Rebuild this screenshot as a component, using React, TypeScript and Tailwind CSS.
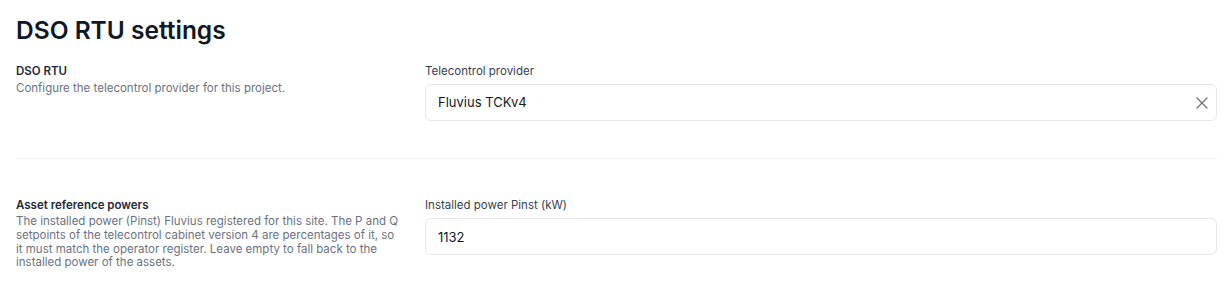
import React, { useState } from 'react';
import { X } from 'lucide-react';

export default function App() {
  const [provider, setProvider] = useState('Fluvius TCKv4');
  const [pinst, setPinst] = useState('1132');

  return (
    <div className="min-h-screen bg-white pl-4 pr-[13px] pt-[14px] font-['Inter',sans-serif] text-gray-900">
      <h1 className="text-[24.5px] leading-8 font-semibold text-gray-900">DSO RTU settings</h1>

      {/* Telecontrol provider */}
      <section className="mt-[17px] grid grid-cols-[385px_1fr] gap-6 border-b border-gray-100 pb-[37px]">
        <div>
          <h3 className="text-[11.5px] leading-4 font-semibold text-gray-800">DSO RTU</h3>
          <p className="mt-0.5 text-[11.5px] leading-[14px] text-gray-500">Configure the telecontrol provider for this project.</p>
        </div>
        <div>
          <label className="block text-[11.5px] leading-4 text-gray-700">Telecontrol provider</label>
          <div className="mt-[5px] flex h-[37px] items-center rounded-md border border-gray-200 bg-white pl-3 pr-1">
            <input
              value={provider}
              onChange={(e) => setProvider(e.target.value)}
              className="flex-1 bg-transparent text-[13px] text-gray-900 outline-none"
            />
            <button onClick={() => setProvider('')} className="text-gray-500">
              <X className="h-5 w-5" strokeWidth={1.5} />
            </button>
          </div>
        </div>
      </section>

      {/* Asset reference powers */}
      <section className="grid grid-cols-[385px_1fr] gap-6 pt-[38px]">
        <div>
          <h3 className="text-[11.5px] leading-4 font-semibold text-gray-800">Asset reference powers</h3>
          <p className="mt-0.5 text-[11.5px] leading-[13.8px] text-gray-500">
            The installed power (Pinst) Fluvius registered for this site. The P and Q setpoints of the telecontrol cabinet version 4 are percentages of it, so it must match the operator register. Leave empty to fall back to the installed power of the assets.
          </p>
        </div>
        <div>
          <label className="block text-[11.5px] leading-4 text-gray-700">Installed power Pinst (kW)</label>
          <input
            value={pinst}
            onChange={(e) => setPinst(e.target.value)}
            className="mt-[5px] h-[37px] w-full rounded-md border border-gray-200 bg-white px-3 text-[13px] text-gray-900 outline-none"
          />
        </div>
      </section>
    </div>
  );
}
